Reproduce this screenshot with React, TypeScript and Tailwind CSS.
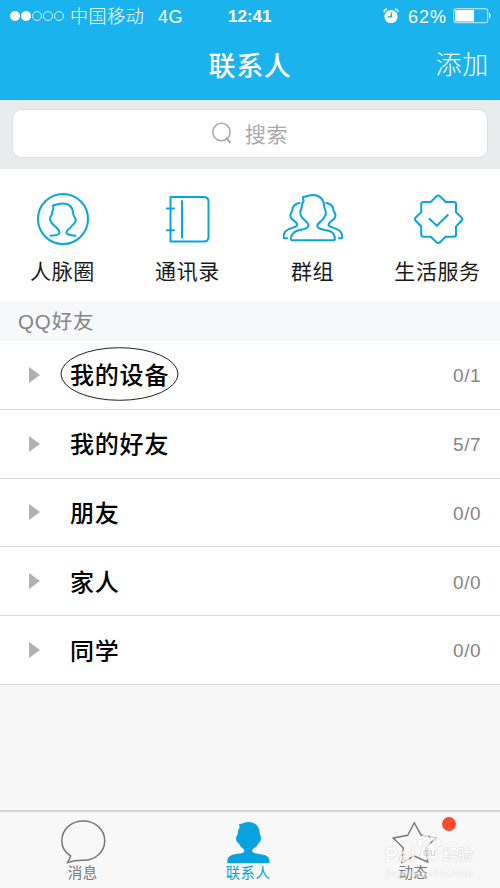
import React from 'react';

const CJK = "font-['Liberation_Sans','Noto_Sans_CJK_SC',sans-serif]";

const groups = [
  { name: '我的设备', count: '0/1', circled: true },
  { name: '我的好友', count: '5/7' },
  { name: '朋友', count: '0/0' },
  { name: '家人', count: '0/0' },
  { name: '同学', count: '0/0' },
];

function CircleIcon() {
  return (
    <svg width="60" height="56" viewBox="0 0 60 56" fill="none" stroke="#08a5df" strokeWidth="2" strokeLinecap="round" strokeLinejoin="round">
      <circle cx="30" cy="28" r="25" />
      <path d="M17.500 44.700C22 44.600 26.500 43.500 26.500 41.500C26.500 38.500 24.500 37.500 21.500 34.800C19.500 33 17 31 17 27.500C17 25.500 19 24.500 19 22.500C19 20 20.800 18 20.500 17L20 14.500C23 13.500 26 12.500 30 12.500C36 12.500 40 16.500 40 22C40 25 42.800 27 42.800 29.500C42.800 32 39.500 33.500 38 36C36.500 38 33.500 38.500 33.500 41.500C33.500 44 38 44.300 42.500 44.700" />
    </svg>
  );
}

function BookIcon() {
  return (
    <svg width="60" height="56" viewBox="0 0 60 56" fill="none" stroke="#08a5df" strokeWidth="2" strokeLinecap="round">
      <path d="M12.500 6h33c3 0 5 1.500 5 4.500v35.500c0 3-2 4.500-5 4.500h-33z" />
      <path d="M24 10v36.500M9 17.500h7M9 39.300h7" />
    </svg>
  );
}

function PeopleIcon() {
  return (
    <svg width="60" height="56" viewBox="0 0 60 56" fill="none" stroke="#08a5df" strokeWidth="2" strokeLinecap="round" strokeLinejoin="round">
      <path d="M9.500 49.300H50.500Q51.900 49.300 51.900 48C51.900 42.500 48.500 40.500 45.500 39.700C41 38.500 34.200 38.500 34.200 35C34.200 32.500 37.500 31 39.500 28.500C41.500 26 43 25 42.900 21.500C42.800 19 41 17.500 41 14.500C41 8.500 36.500 4 30 4C26 4 22.500 5.500 19.800 6.300L20.600 10C18.500 12.500 19.200 16 18.200 18C17 20.500 16.800 23.500 19 26.500C21.500 29.500 25.500 31.500 25.500 34.500C25.500 38.500 18.500 38.300 14.200 39.700C10.500 41 8 43 8 48Q8 49.300 9.500 49.300Z" />
      <path d="M16.500 12C12.500 12.500 9.500 15.500 9.400 18.500C9.400 21.500 7 22 7.300 25C7.500 28 10.500 29 12.500 31C14 32.500 15 33.800 13.500 35C10.500 37 4.500 37.500 2 41C.5 43.500.5 45 .6 46.500Q.7 47.300 1.500 47.300H4" />
      <path d="M43.300 12C47.300 12.500 50.300 15.500 50.400 18.500C50.400 21.500 52.800 22 52.500 25C52.300 28 49.300 29 47.300 31C45.800 32.500 44.800 33.800 46.300 35C49.300 37 55.300 37.500 57.800 41C59.300 43.500 59.300 45 59.200 46.500Q59.100 47.300 58.300 47.300H55.800" />
    </svg>
  );
}

function ServiceIcon() {
  return (
    <svg width="60" height="56" viewBox="0 0 60 56" fill="none" stroke="#08a5df" strokeWidth="2" strokeLinecap="round" strokeLinejoin="round">
      <path d="M28.500 5.300q1.700-1.500 3.400 0l5.800 5.700h8q2.300 0 2.300 2.300v8l5.500 5.100q1.500 1.700 0 3.400l-5.500 5.700v8q0 2.300-2.300 2.300h-8l-5.800 5.400q-1.700 1.500-3.400 0l-5.800-5.400h-7.200q-2.300 0-2.300-2.300v-8l-5.500-5.700q-1.500-1.700 0-3.400l5.500-5.100v-8q0-2.300 2.300-2.300h7.200z" />
      <path d="m21.500 28 7.300 6.700 11-10.700" />
    </svg>
  );
}

const shortcuts = [
  { label: '人脉圈', icon: <CircleIcon /> },
  { label: '通讯录', icon: <BookIcon /> },
  { label: '群组', icon: <PeopleIcon /> },
  { label: '生活服务', icon: <ServiceIcon /> },
];

function StatusBar() {
  return (
    <div className="flex h-8 items-center pr-2 pl-[10px] text-[18px] leading-8">
      <div className="flex gap-px">
        <i className="size-[10px] rounded-full bg-white" />
        <i className="size-[10px] rounded-full bg-white" />
        <i className="size-[10px] rounded-full border border-white/80" />
        <i className="size-[10px] rounded-full border border-white/80" />
        <i className="size-[10px] rounded-full border border-white/80" />
      </div>
      <span className="ml-[6px] w-[88px] pt-px font-light tracking-[0.6px]">中国移动</span>
      <span className="w-[70px] pt-px tracking-[0.5px]">4G</span>
      <span className="w-[155px] pt-px text-[17px] font-bold">12:41</span>
      <svg width="16" height="16" viewBox="0 0 16 16">
        <circle cx="8" cy="8.500" r="6.600" fill="white" />
        <path d="M1 4.200Q1 1.500 4 1M12 1q3 .5 3 3.200" fill="none" stroke="white" strokeWidth="1.300" />
        <path d="M8.300 4.500v4.300H4.800" fill="none" stroke="#1bb3ee" strokeWidth="1.400" />
      </svg>
      <span className="ml-[9px] w-[45px] pt-px text-[18px] tracking-[1px]">62%</span>
      <svg width="39" height="18" viewBox="0 0 39 18">
        <rect x=".7" y="1.700" width="34" height="14" rx="2.500" fill="none" stroke="#a5e1fa" strokeWidth="1.200" />
        <path d="M2 3h19v11.500H2z" fill="white" />
        <path d="M36 5.500q3.500 3 0 6z" fill="white" />
      </svg>
    </div>
  );
}

function Watermark() {
  return (
    <div className="absolute top-[31px] left-[54px] text-white opacity-70 [text-shadow:0_0_1px_#999]">
      <div className="flex h-[24px] items-center font-bold">
        <span className="text-[20px]">Bai</span>
        <div className="relative -mt-4 flex h-[32px] w-[27px] justify-center">
          <svg width="26" height="30" viewBox="0 0 26 30" fill="white" stroke="#d4d4d4" strokeWidth=".6">
            <ellipse cx="4" cy="12" rx="3" ry="4" />
            <ellipse cx="9.500" cy="5.500" rx="3" ry="4.300" />
            <ellipse cx="17" cy="5.500" rx="3" ry="4.300" />
            <ellipse cx="22.500" cy="12" rx="3" ry="4" />
            <path d="M13 12c5 0 9 7 9 12s-4 5-9 4c-5 1-9 0-9-4s4-12 9-12z" />
          </svg>
          <span className="absolute top-[14px] left-[7px] text-[11px] leading-[14px] text-[#ccc] [text-shadow:none]">du</span>
        </div>
        <span className="text-[15px]">经验</span>
      </div>
      <div className="h-[14px] text-[10px] leading-[13px] font-bold opacity-50">jingyan.baidu.com</div>
    </div>
  );
}

function TabBar() {
  return (
    <nav className="grid h-[78px] shrink-0 grid-cols-3 border-t-2 border-[#d6d6d6] bg-[#f8f8f8] pr-[4px] text-[14.500px] leading-[16px] text-[#777]">
      <div className="flex flex-col items-center pt-[7px]">
        <svg width="48" height="46" viewBox="0 0 48 46" fill="none" stroke="#777" strokeWidth="1.500">
          <path d="M8.700 43.500 11.600 37C6 33.500 2.800 28 2.800 21.800 2.800 10.500 12.300 2 24.200 2s21.500 8.500 21.500 19.700-9.500 19.600-21.200 19.600c-7.500-.2-11 .7-15.800 2.200Z" />
        </svg>
        <span className="tracking-[0.4px]">消息</span>
      </div>
      <div className="flex flex-col items-center pt-[7px] text-[#08a3de]">
        <svg width="48" height="46" viewBox="0 0 48 46" fill="currentColor">
          <path d="M3.300 44.300C3.300 39 4.500 37.500 8 36C12 34.300 20.300 35 20.300 32C20.300 29.500 16 28.500 15 24.500C13 24 11.800 21 12 19C12.200 17 13.700 16.500 13.700 14.500C13.700 12 14.500 10 15.700 8.500L15 5C17.500 5.500 20 3 25 3C31 3 35.500 7.500 35.500 13C35.500 16 37.200 16.500 37 19.500C36.800 22 35.500 24 34.300 24.500C33 28.500 28 29.500 28 32C28 35 36 34.300 40.500 36C44.500 37.500 45.700 39.500 45.700 44.300Z" />
        </svg>
        <span className="tracking-[0.4px]">联系人</span>
      </div>
      <div className="relative flex flex-col items-center pt-[7px]">
        <svg width="48" height="46" viewBox="0 0 48 46" fill="none" stroke="#777" strokeWidth="1.400">
          <path d="M25.300 3.700 18.700 16.300 4.300 19 14.300 29 12.700 43.300 25.300 37 38.700 43 36.700 29.300 46.700 18.700 32 16Z" />
        </svg>
        <span className="tracking-[0.4px]">动态</span>
        <i className="absolute top-[5px] left-[111px] size-[14px] rounded-full bg-[#fa4b30]" />
        <Watermark />
      </div>
    </nav>
  );
}

export default function App() {
  return (
    <div className={`flex h-[888px] w-[500px] flex-col overflow-hidden bg-[#f7f7f8] text-black ${CJK}`}>
      <header className="h-[100px] shrink-0 bg-[#1bb3ee] text-white">
        <StatusBar />
        <div className="grid h-[68px] grid-cols-3 items-center pr-[11px] pl-[11px]">
          <span />
          <h1 className="pt-[2px] text-center text-[27px] font-medium leading-[66px] tracking-[0.7px]">联系人</h1>
          <span className="-mt-1 pt-[2px] text-right text-[26px] font-light leading-[64px] tracking-[0.8px]">添加</span>
        </div>
      </header>
      <div className="h-[69px] shrink-0 border-t border-[#d5e4ee] bg-[#e9ebed] px-3 pt-2">
        <div className="flex h-[49px] items-center justify-center rounded-[10px] border border-[#dedfe0] bg-white text-[21px] text-[#aaa]">
          <svg className="mr-[13px]" width="21" height="23" viewBox="0 0 21 23" fill="none" stroke="#aaa" strokeWidth="1.500">
            <circle cx="9.500" cy="10" r="8.700" />
            <path d="m14 15.500 4.500 5.500" strokeWidth="2" />
          </svg>
          <span className="-ml-px pt-px leading-[47px] tracking-[0.5px]">搜索</span>
        </div>
      </div>
      <div className="grid h-[132px] shrink-0 grid-cols-4 bg-white pt-[22px]">
        {shortcuts.map((s) => (
          <div key={s.label} className="flex flex-col items-center">
            {s.icon}
            <span className="mt-[9px] text-[21px] leading-[32px] tracking-[0.6px] text-[#1a1a1a]">{s.label}</span>
          </div>
        ))}
      </div>
      <div className="h-10 shrink-0 bg-[#f7f8fa] pt-px pl-[18px] text-[20.500px] leading-10 tracking-[0.900px] text-[#858585]">QQ好友</div>
      <main className="flex h-[344px] shrink-0 flex-col bg-white">
        {groups.map((g) => (
          <div key={g.name} className="flex flex-1 items-center border-b border-[#d8d8d8] pr-[19px] pl-[29px]">
            <svg width="11" height="16" viewBox="0 0 11 16" fill="#b0b0b0">
              <path d="M0 0v16l11-8z" />
            </svg>
            <span className="relative ml-[30px] pt-[3px] text-[24px] font-medium leading-[60px] tracking-[0.800px]">
              {g.name}
              {g.circled && (
                <svg className="absolute top-[4px] -left-[10px]" width="119" height="54" viewBox="0 0 119 54" fill="none" stroke="#222" strokeWidth="1">
                  <ellipse cx="59.500" cy="27" rx="58.500" ry="26.300" />
                </svg>
              )}
            </span>
            <span className="ml-auto pt-[3px] text-[19px] tracking-[0.500px] text-[#858585]">{g.count}</span>
          </div>
        ))}
      </main>
      <div className="min-h-0 flex-1" />
      <TabBar />
    </div>
  );
}
